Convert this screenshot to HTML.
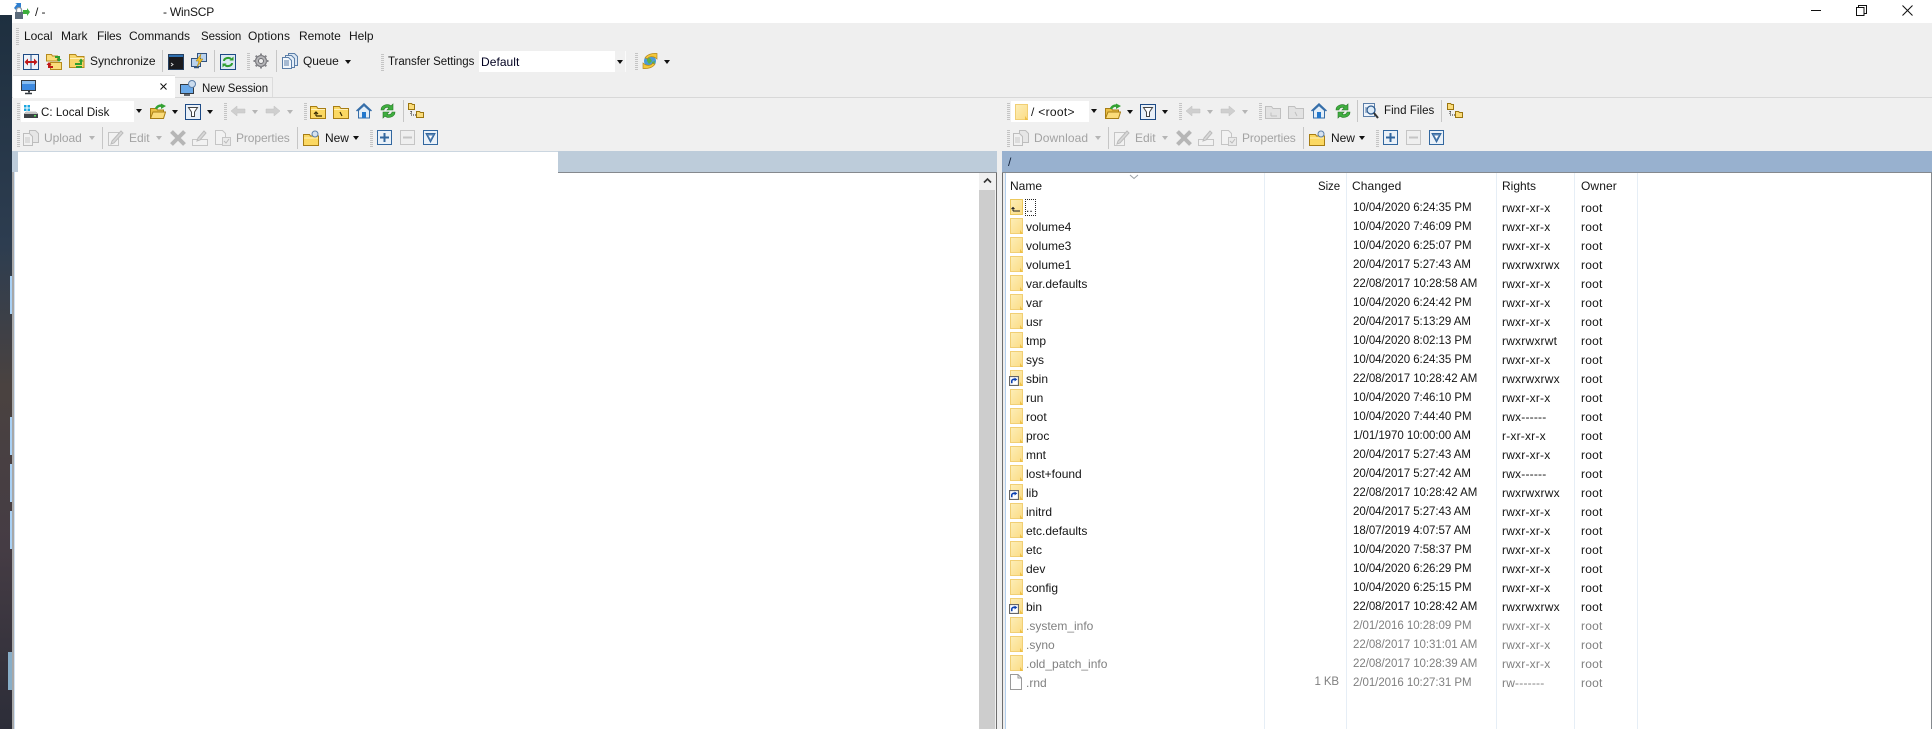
<!DOCTYPE html>
<html><head><meta charset="utf-8"><title>WinSCP</title>
<style>
html,body{margin:0;padding:0;width:1932px;height:729px;overflow:hidden;background:#fff}
body{position:relative;font:11.5px "Liberation Sans",sans-serif;color:#151515}
div,span,svg{position:absolute}
.t{white-space:nowrap;line-height:16px;height:16px;letter-spacing:-.1px}
.d{color:#a3a3a3}
.m{font-size:12px;letter-spacing:-.05px}
.z{font-size:11.5px;letter-spacing:-.1px}
svg.i{width:16px;height:16px;overflow:visible}
svg.f{left:1010px;width:13px;height:16px}
svg.l{left:1009px;width:10px;height:10px}
.g{width:3px;height:17px;background:repeating-linear-gradient(#c4c4c4 0 1px,#efefef 1px 2px)}
.s{width:1px;height:22px;background:#c6c6c6}
.a{width:0;height:0;border:3.5px solid transparent;border-top:4px solid #111;border-bottom:0}
.ad{border-top-color:#b5b5b5}
.r{left:0;top:0;height:19px;width:1px}
.r span{white-space:nowrap;line-height:19px;top:1px;font-size:12px;letter-spacing:.2px}
.r span.n{left:1026px;letter-spacing:0}
.r span.c{left:1353px;top:1px;font-size:11.5px;letter-spacing:-.05px}
.h{left:1502px}.o{left:1581px}
.q{color:#808080}
.v{width:1px;background:#e6eef6;top:173px;height:556px}
</style></head><body>
<svg width="0" height="0" style="position:absolute">
<defs>
<linearGradient id="fg" x1="0" x2="1" y1="0" y2="1"><stop offset="0" stop-color="#fdeeb8"/><stop offset="1" stop-color="#fbdc85"/></linearGradient>
<symbol id="split" viewBox="0 0 16 16"><rect x=".5" y=".5" width="15" height="15" fill="#eef3f9" stroke="#1d4a85"/><path d="M8 1v14" stroke="#1d4a85"/><path d="M3 8h10" stroke="#c01818" stroke-width="2"/><path d="M5 4.500L1.500 8 5 11.500zM11 4.500L14.500 8 11 11.500z" fill="#c01818"/></symbol>
<symbol id="syn1" viewBox="0 0 16 16"><path d="M.5 .5h5l1 1.500h5v5H.5z" fill="#fbdc7a" stroke="#b58a1e"/><path d="M4.500 8.500h11v7h-11z" fill="#fbdc7a" stroke="#b58a1e"/><path d="M9 3h4v2" fill="none" stroke="#2f9e2f" stroke-width="2"/><path d="M10.500 5h5L13 8z" fill="#2f9e2f"/><path d="M7 13H3v-2" fill="none" stroke="#c01818" stroke-width="2"/><path d="M.5 11h5L3 8z" fill="#c01818"/></symbol>
<symbol id="syn2" viewBox="0 0 16 16"><path d="M.5 1.500h6l1.500 2h7v11H.5z" fill="#f7d568" stroke="#b58a1e"/><path d="M1 5.500h14" stroke="#fff0b8"/><path d="M6 11h6V8" fill="none" stroke="#2f9e2f" stroke-width="2"/><path d="M9.500 8.500h5L12 5.500z" fill="#2f9e2f"/><path d="M13 14H7" stroke="#2f9e2f" stroke-width="2"/></symbol>
<symbol id="term" viewBox="0 0 16 16"><rect x=".5" y=".5" width="15" height="15" fill="#1a1a1e" stroke="#27405f"/><rect x="1" y="1" width="14" height="2" fill="#2e6fb0"/><path d="M3 9l2 1.500L3 12" fill="none" stroke="#ddd"/></symbol>
<symbol id="putty" viewBox="0 0 16 16"><rect x="6.500" y=".5" width="9" height="8" fill="#b9d2ee" stroke="#31537f"/><rect x=".5" y="5.500" width="9" height="8" fill="#b9d2ee" stroke="#31537f"/><path d="M3 14.500h5" stroke="#31537f" stroke-width="1.500"/><path d="M10 1L5 8h3l-2 6 6-8H9z" fill="#f2c12e" stroke="#a37c10" stroke-width=".5"/></symbol>
<symbol id="bsync" viewBox="0 0 16 16"><rect x=".5" y=".5" width="15" height="15" fill="#dce8f4" stroke="#1d4a85"/><path d="M4 7c0-3 5-4 7-2" fill="none" stroke="#2f9e2f" stroke-width="2"/><path d="M9.500 6.500h4V2.500z" fill="#2f9e2f"/><path d="M12 9c0 3-5 4-7 2" fill="none" stroke="#2f9e2f" stroke-width="2"/><path d="M6.500 9.500h-4v4z" fill="#2f9e2f"/></symbol>
<symbol id="gear" viewBox="0 0 16 16"><circle cx="8" cy="8" r="5.500" fill="#b5b5b8" stroke="#6e6e72" stroke-width="1"/><circle cx="8" cy="8" r="2.500" fill="#efefef" stroke="#6e6e72"/><path d="M8 .5v2.500M8 13v2.500M.5 8H3M13 8h2.500M2.700 2.700l1.800 1.800M11.500 11.500l1.800 1.800M13.300 2.700l-1.800 1.800M4.500 11.500l-1.800 1.800" stroke="#85858a" stroke-width="2"/></symbol>
<symbol id="queue" viewBox="0 0 16 16"><path d="M6.500 .5h6l3 3v9h-9z" fill="#dbe7f3" stroke="#5b7ea8"/><path d="M3.500 2.500h6l3 3v9h-9z" fill="#e6eff8" stroke="#5b7ea8"/><path d="M.5 4.500h6l3 3v8h-9z" fill="#f2f7fc" stroke="#5b7ea8"/><path d="M2 8h5M2 10h5M2 12h5" stroke="#5b7ea8"/></symbol>
<symbol id="globe" viewBox="0 0 16 16"><circle cx="8" cy="8" r="6" fill="#4a9bd9"/><path d="M5 5l3 0 2 3-3 3-2-3zM10 9l3-1-1 4-2 1z" fill="#5ab04a"/><path d="M3 5C5 1.500 10 0 15 .5V6l-2-1.500C10 3 7 3.500 5.500 5.500z" fill="#f3c73a" stroke="#b58a1e" stroke-width=".7"/><path d="M13 11c-2 3.500-7 5-12 4.500V10l2 1.500c3 1.500 6 1 7.500-1z" fill="#f3c73a" stroke="#b58a1e" stroke-width=".7"/></symbol>
<symbol id="pc" viewBox="0 0 16 16"><rect x=".5" y="1.500" width="14" height="10" fill="#3d8ae0" stroke="#33393f"/><rect x="1" y="2" width="13" height="3" fill="#88bdf0"/><path d="M7 12h2v1.500H7z" fill="#33393f"/><path d="M4 14.500h7" stroke="#33393f" stroke-width="1.500"/></symbol>
<symbol id="pcnew" viewBox="0 0 16 16"><rect x=".5" y="4.500" width="13" height="9" fill="#6aa9e8" stroke="#33393f"/><path d="M4 15h6" stroke="#33393f" stroke-width="1.500"/><circle cx="12" cy="4" r="3.500" fill="#cbdcee" stroke="#5b7ea8"/></symbol>
<symbol id="drive" viewBox="0 0 16 16"><rect x="1" y="1" width="2.500" height="2.500" fill="#19a6e0"/><rect x="4.500" y="1" width="2.500" height="2.500" fill="#19a6e0"/><rect x="1" y="4.500" width="2.500" height="2.500" fill="#19a6e0"/><rect x="4.500" y="4.500" width="2.500" height="2.500" fill="#19a6e0"/><path d="M1 10l2-2h10l2 2z" fill="#d5d5d5" stroke="#888" stroke-width=".5"/><rect x="1" y="10" width="14" height="4" fill="#3e4347"/><rect x="11" y="11" width="2" height="1.500" fill="#5be05b"/></symbol>
<symbol id="open" viewBox="0 0 16 16"><path d="M.5 5.500h6l1 1.500h6v8h-13z" fill="#eabf45" stroke="#a77d14"/><path d="M.5 15.500L3 9h12.500l-2 6.500z" fill="#fbdc7a" stroke="#a77d14"/><path d="M6 6c1-3 4-4 7-3" fill="none" stroke="#33a133" stroke-width="2.500"/><path d="M11 .5L16 3l-5 3z" fill="#33a133"/></symbol>
<symbol id="filter" viewBox="0 0 16 16"><rect x=".5" y=".5" width="15" height="15" fill="#e9f0f8" stroke="#1d4a85" stroke-width="1"/><path d="M3.500 3.500h9L9.500 8v4.500h-3V8z" fill="#fff" stroke="#444"/></symbol>
<symbol id="back" viewBox="0 0 16 16"><path d="M1 8l6-5v3h8v4H7v3z" fill="#cfcfcf" stroke="#c0c0c0" stroke-width=".5"/></symbol>
<symbol id="fwd" viewBox="0 0 16 16"><path d="M15 8L9 3v3H1v4h8v3z" fill="#cfcfcf" stroke="#c0c0c0" stroke-width=".5"/></symbol>
<symbol id="up" viewBox="0 0 16 16"><path d="M.5 2.500h6l1.500 2h7.500v10H.5z" fill="#fbd862" stroke="#a77d14"/><path d="M1 5.500h14" stroke="#fff0b8"/><path d="M6 12h6M6 8.500V12M4 10l2-2 2 2" fill="none" stroke="#3a2c00" stroke-width="1.200"/></symbol>
<symbol id="rootf" viewBox="0 0 16 16"><path d="M.5 2.500h6l1.500 2h7.500v10H.5z" fill="#fbd862" stroke="#a77d14"/><path d="M1 5.500h14" stroke="#fff0b8"/><path d="M7 8l2 4" stroke="#3a2c00" stroke-width="1.200"/></symbol>
<symbol id="upd" viewBox="0 0 16 16"><path d="M.5 2.500h6l1.500 2h7.500v10H.5z" fill="#e2e2e2" stroke="#c0c0c0"/><path d="M6 12h6M6 8.500V12" fill="none" stroke="#c0c0c0"/></symbol>
<symbol id="rootd" viewBox="0 0 16 16"><path d="M.5 2.500h6l1.500 2h7.500v10H.5z" fill="#e2e2e2" stroke="#c0c0c0"/><path d="M7 8l2 4" stroke="#c0c0c0"/></symbol>
<symbol id="home" viewBox="0 0 16 16"><path d="M.5 8L8 1l7.500 7" fill="#9cc0e4" stroke="#356da8" stroke-width="1.500"/><path d="M2.500 7.500V15h11V7.500L8 2.500z" fill="#e3eef8" stroke="#356da8"/><rect x="6" y="9" width="4" height="6" fill="#2277cc"/></symbol>
<symbol id="refr" viewBox="0 0 16 16"><path d="M1 7c0-5 7-7 10-4l2-2v6H7l2-2C7 3.500 4 5 4 7z" fill="#3fae3f" stroke="#257a25" stroke-width=".6"/><path d="M15 9c0 5-7 7-10 4l-2 2V9h6l-2 2c2 1.500 5 0 5-2z" fill="#3fae3f" stroke="#257a25" stroke-width=".6"/></symbol>
<symbol id="tree" viewBox="0 0 16 16"><path d="M.5 .5h3l1 1h2v5h-6zM8.500 8.500h3l1 1h3v5h-7z" fill="#fbdc7a" stroke="#9a7510"/><path d="M3 8v4h5M3 9h1" stroke="#222" stroke-dasharray="1 1" fill="none"/></symbol>
<symbol id="find" viewBox="0 0 16 16"><rect x=".5" y=".5" width="11" height="13" fill="#eef4fb" stroke="#5b7ea8"/><circle cx="8" cy="7" r="4" fill="#dcebf8" stroke="#2c5a8f" stroke-width="1.300"/><path d="M11 10l4 5" stroke="#333" stroke-width="2"/><path d="M2 5h2M2 7h2M2 9h2" stroke="#5b7ea8"/></symbol>
<symbol id="upl" viewBox="0 0 16 16"><path d="M6.500 .5h6l3 3v9h-9z" fill="#e6e6e6" stroke="#bdbdbd"/><path d="M.5 3.500h6l3 3v9h-9z" fill="#f0f0f0" stroke="#bdbdbd"/><path d="M2 8h5M2 10h5M2 12h5" stroke="#c8c8c8"/></symbol>
<symbol id="edit" viewBox="0 0 16 16"><path d="M.5 2.500h10v13H.5z" fill="#f2f2f2" stroke="#c5c5c5"/><path d="M4 11l9-10 2 2-9 10-3 1z" fill="#d8d8d8" stroke="#bbb"/></symbol>
<symbol id="del" viewBox="0 0 16 16"><path d="M1.500 1.500l13 13M14.500 1.500l-13 13" stroke="#b6b6b6" stroke-width="4"/></symbol>
<symbol id="ren" viewBox="0 0 16 16"><path d="M.5 9.500h15v6H.5z" fill="#f2f2f2" stroke="#c5c5c5"/><path d="M6 8l6-7 2 2-6 7-3 1z" fill="#d8d8d8" stroke="#bbb"/></symbol>
<symbol id="prop" viewBox="0 0 16 16"><path d="M.5 .5h7l3 3v11H.5z" fill="#f2f2f2" stroke="#c5c5c5"/><rect x="7.500" y="7.500" width="8" height="8" fill="#eaeaea" stroke="#c5c5c5"/><path d="M9 11l2 2 3-4" fill="none" stroke="#bbb"/></symbol>
<symbol id="newf" viewBox="0 0 16 16"><path d="M.5 4.500h6l1 1.500h8v9.500H.5z" fill="#fbd862" stroke="#a77d14"/><path d="M1 8h14" stroke="#fff0b8"/><circle cx="12" cy="4" r="3" fill="#d6e2ef" stroke="#5b7ea8"/></symbol>
<symbol id="plus" viewBox="0 0 16 16"><rect x=".5" y=".5" width="14" height="14" fill="#eaf1f8" stroke="#32679f"/><path d="M7.500 3v9M3 7.500h9" stroke="#32679f" stroke-width="2"/></symbol>
<symbol id="minus" viewBox="0 0 16 16"><rect x=".5" y=".5" width="14" height="14" fill="#efefef" stroke="#c5c5c5"/><path d="M3 7.500h9" stroke="#c5c5c5" stroke-width="2"/></symbol>
<symbol id="inv" viewBox="0 0 16 16"><rect x=".5" y=".5" width="14" height="14" fill="#eaf1f8" stroke="#32679f"/><path d="M3 3.500h9L7.500 12z" fill="#5b86b5" stroke="#32679f"/><path d="M5.500 5.500h4L7.500 9z" fill="#fff"/></symbol>
<symbol id="lock" viewBox="0 0 16 16"><path d="M0 5L3 1 1 0h6v6L5 4 2 7z" fill="#2f7fd0"/><path d="M9 7l4 0 0-2 3 4-3 4v-2H9l-1 4z" fill="#3cae3c"/><rect x="1" y="9" width="8" height="7" fill="#5b6b7b"/><path d="M2.500 9V7a2.500 2.500 0 0 1 5 0V9" fill="none" stroke="#8a96a2" stroke-width="1.300"/></symbol>
<symbol id="ff" viewBox="0 0 13 16"><rect x=".5" y=".5" width="12" height="15" fill="url(#fg)" stroke="#f1cf74"/><path d="M10 16v-4l3 4z" fill="#eebf45"/></symbol>
<symbol id="fu" viewBox="0 0 13 16"><rect x=".5" y=".5" width="12" height="15" fill="url(#fg)" stroke="#ecc85c"/><path d="M3 12h7M3 8.500V12M1.500 10L3 8.500 4.500 10" fill="none" stroke="#222" stroke-width="1"/></symbol>
<symbol id="lnk" viewBox="0 0 9 9"><rect x=".5" y=".5" width="8" height="8" fill="#fff" stroke="#666"/><path d="M2.500 6.500V4.500c0-1 1-1.500 2-1.500H6" fill="none" stroke="#0b3fae" stroke-width="1.400"/><path d="M5 1.500L7.500 3 5 5z" fill="#0b3fae"/></symbol>
</defs></svg>

<!-- desktop strip -->
<div style="left:0;top:15px;width:12px;height:714px;background:linear-gradient(#1e2f3f 0,#2d3d50 32%,#4a4240 52%,#453c44 75%,#2c2d38 100%)"></div>
<div style="left:10px;top:276px;width:2px;height:38px;background:#a8d0f4"></div>
<div style="left:10px;top:417px;width:2px;height:38px;background:#a8d0f4"></div>
<div style="left:10px;top:464px;width:2px;height:38px;background:#a8d0f4"></div>
<div style="left:10px;top:511px;width:2px;height:38px;background:#a8d0f4"></div>
<div style="left:8px;top:652px;width:4px;height:38px;background:#88aec8"></div>

<!-- window bg -->
<div style="left:12px;top:23px;width:1920px;height:128px;background:#efefef"></div>
<div style="left:12px;top:97px;width:1920px;height:1px;background:#d8d8d8"></div>
<div style="left:12px;top:98px;width:1920px;height:53px;background:#f0f0f0"></div>
<div style="left:12px;top:151px;width:546px;height:1px;background:#cbd6e0"></div>

<!-- title -->
<svg class="i" style="left:14px;top:3px"><use href="#lock"/></svg>
<span class="t" style="left:35px;top:4px;font-size:12px">/ -</span>
<span class="t" style="left:163px;top:4px;font-size:12px;letter-spacing:-.2px">- WinSCP</span>
<div style="left:1811px;top:10px;width:10px;height:1px;background:#111"></div>
<svg style="left:1856px;top:5px;width:11px;height:11px"><path d="M.5 2.500h7.500v8h-7.500zM2.500 2.500v-2h8v8h-2.500" fill="none" stroke="#111"/></svg>
<svg style="left:1902px;top:5px;width:11px;height:11px"><path d="M.5 .5l10 10M10.500 .5l-10 10" stroke="#111" fill="none"/></svg>

<!-- menu -->
<div class="g" style="left:16px;top:28px"></div>
<span class="t m" style="left:24px;top:28px">Local</span>
<span class="t m" style="left:61px;top:28px">Mark</span>
<span class="t m" style="left:97px;top:28px;letter-spacing:-.2px">Files</span>
<span class="t m" style="left:129px;top:28px">Commands</span>
<span class="t z" style="left:201px;top:29px">Session</span>
<span class="t m" style="left:248px;top:28px;letter-spacing:.1px">Options</span>
<span class="t m" style="left:299px;top:28px">Remote</span>
<span class="t m" style="left:349px;top:28px">Help</span>

<!-- toolbar row 2 -->
<div class="g" style="left:17px;top:53px"></div>
<svg class="i" style="left:23px;top:54px"><use href="#split"/></svg>
<svg class="i" style="left:46px;top:54px"><use href="#syn1"/></svg>
<svg class="i" style="left:69px;top:53px"><use href="#syn2"/></svg>
<span class="t m" style="left:90px;top:53px">Synchronize</span>
<div class="s" style="left:162px;top:50px"></div>
<svg class="i" style="left:168px;top:54px"><use href="#term"/></svg>
<svg class="i" style="left:191px;top:53px"><use href="#putty"/></svg>
<div class="s" style="left:214px;top:50px"></div>
<svg class="i" style="left:220px;top:54px"><use href="#bsync"/></svg>
<div class="g" style="left:247px;top:53px"></div>
<svg class="i" style="left:253px;top:53px"><use href="#gear"/></svg>
<div class="s" style="left:276px;top:50px"></div>
<svg class="i" style="left:282px;top:53px"><use href="#queue"/></svg>
<span class="t m" style="left:303px;top:53px">Queue</span>
<div class="a" style="left:345px;top:60px"></div>
<div class="g" style="left:381px;top:54px"></div>
<span class="t" style="left:388px;top:54px;font-size:11.5px;letter-spacing:-.05px">Transfer Settings</span>
<div style="left:479px;top:51px;width:136px;height:21px;background:#fff"></div>
<div style="left:615px;top:51px;width:11px;height:21px;background:#f0f0f0;box-shadow:inset -1px 0 #fafafa"></div>
<span class="t m" style="left:481px;top:54px;color:#000020;letter-spacing:.05px">Default</span>
<div class="a" style="left:617px;top:60px"></div>
<div class="g" style="left:635px;top:53px"></div>
<svg class="i" style="left:642px;top:53px"><use href="#globe"/></svg>
<div class="a" style="left:664px;top:60px"></div>

<!-- tabs -->
<div style="left:13px;top:76px;width:162px;height:22px;background:#fff;box-shadow:0 -1px #dedede"></div>
<svg class="i" style="left:21px;top:79px"><use href="#pc"/></svg>
<svg style="left:160px;top:83px;width:7px;height:7px"><path d="M.5 .5l6 6M6.500 .5l-6 6" stroke="#111" fill="none"/></svg>
<div style="left:175px;top:77px;width:98px;height:20px;background:#f0f0f0;box-shadow:inset -1px 0 #dcdcdc,inset 0 1px #dcdcdc"></div>
<svg class="i" style="left:180px;top:80px"><use href="#pcnew"/></svg>
<span class="t z" style="left:202px;top:81px;letter-spacing:-.1px">New Session</span>

<!-- left row 3 -->
<div class="g" style="left:17px;top:103px"></div>
<div style="left:21px;top:101px;width:124px;height:21px;background:#fff"></div>
<div style="left:134px;top:101px;width:11px;height:21px;background:#f0f0f0"></div>
<svg class="i" style="left:23px;top:104px"><use href="#drive"/></svg>
<span class="t z" style="left:41px;top:105px;letter-spacing:.05px">C: Local Disk</span>
<div class="a" style="left:136px;top:109px"></div>
<svg class="i" style="left:150px;top:103px"><use href="#open"/></svg>
<div class="a" style="left:172px;top:110px"></div>
<svg class="i" style="left:185px;top:104px"><use href="#filter"/></svg>
<div class="a" style="left:207px;top:110px"></div>
<div class="g" style="left:224px;top:103px"></div>
<svg class="i" style="left:230px;top:103px"><use href="#back"/></svg>
<div class="a ad" style="left:252px;top:110px"></div>
<svg class="i" style="left:265px;top:103px"><use href="#fwd"/></svg>
<div class="a ad" style="left:287px;top:110px"></div>
<div class="g" style="left:304px;top:103px"></div>
<svg class="i" style="left:310px;top:104px"><use href="#up"/></svg>
<svg class="i" style="left:333px;top:104px"><use href="#rootf"/></svg>
<svg class="i" style="left:356px;top:103px"><use href="#home"/></svg>
<svg class="i" style="left:380px;top:103px"><use href="#refr"/></svg>
<div class="s" style="left:403px;top:100px"></div>
<svg class="i" style="left:408px;top:103px"><use href="#tree"/></svg>

<!-- left row 4 -->
<div class="g" style="left:17px;top:130px"></div>
<svg class="i" style="left:23px;top:130px"><use href="#upl"/></svg>
<span class="t m d" style="left:44px;top:130px">Upload</span>
<div class="a ad" style="left:89px;top:136px"></div>
<div class="s" style="left:102px;top:127px"></div>
<svg class="i" style="left:108px;top:130px"><use href="#edit"/></svg>
<span class="t m d" style="left:129px;top:130px">Edit</span>
<div class="a ad" style="left:156px;top:136px"></div>
<svg class="i" style="left:170px;top:130px"><use href="#del"/></svg>
<svg class="i" style="left:192px;top:130px"><use href="#ren"/></svg>
<svg class="i" style="left:215px;top:130px"><use href="#prop"/></svg>
<span class="t m d" style="left:236px;top:130px;letter-spacing:-.1px">Properties</span>
<div class="s" style="left:297px;top:127px"></div>
<svg class="i" style="left:303px;top:130px"><use href="#newf"/></svg>
<span class="t m" style="left:325px;top:130px">New</span>
<div class="a" style="left:353px;top:136px"></div>
<div class="g" style="left:370px;top:130px"></div>
<svg class="i" style="left:377px;top:130px"><use href="#plus"/></svg>
<svg class="i" style="left:400px;top:130px"><use href="#minus"/></svg>
<svg class="i" style="left:423px;top:130px"><use href="#inv"/></svg>

<!-- right row 3 -->
<div class="g" style="left:1007px;top:103px"></div>
<div style="left:1011px;top:101px;width:89px;height:21px;background:#fff"></div>
<div style="left:1089px;top:101px;width:11px;height:21px;background:#f0f0f0"></div>
<svg class="i" style="left:1015px;top:104px;width:13px"><use href="#ff"/></svg>
<span class="t m" style="left:1031px;top:104px;letter-spacing:.3px">/ &lt;root&gt;</span>
<div class="a" style="left:1091px;top:109px"></div>
<svg class="i" style="left:1105px;top:103px"><use href="#open"/></svg>
<div class="a" style="left:1127px;top:110px"></div>
<svg class="i" style="left:1140px;top:104px"><use href="#filter"/></svg>
<div class="a" style="left:1162px;top:110px"></div>
<div class="g" style="left:1179px;top:103px"></div>
<svg class="i" style="left:1185px;top:103px"><use href="#back"/></svg>
<div class="a ad" style="left:1207px;top:110px"></div>
<svg class="i" style="left:1220px;top:103px"><use href="#fwd"/></svg>
<div class="a ad" style="left:1242px;top:110px"></div>
<div class="g" style="left:1259px;top:103px"></div>
<svg class="i" style="left:1265px;top:104px"><use href="#upd"/></svg>
<svg class="i" style="left:1288px;top:104px"><use href="#rootd"/></svg>
<svg class="i" style="left:1311px;top:103px"><use href="#home"/></svg>
<svg class="i" style="left:1335px;top:103px"><use href="#refr"/></svg>
<div class="s" style="left:1357px;top:100px"></div>
<svg class="i" style="left:1363px;top:103px"><use href="#find"/></svg>
<span class="t z" style="left:1384px;top:103px;letter-spacing:.05px">Find Files</span>
<div class="s" style="left:1441px;top:100px"></div>
<svg class="i" style="left:1447px;top:103px"><use href="#tree"/></svg>

<!-- right row 4 -->
<div class="g" style="left:1007px;top:130px"></div>
<svg class="i" style="left:1013px;top:130px"><use href="#upl"/></svg>
<span class="t m d" style="left:1034px;top:130px;letter-spacing:.1px">Download</span>
<div class="a ad" style="left:1095px;top:136px"></div>
<div class="s" style="left:1108px;top:127px"></div>
<svg class="i" style="left:1114px;top:130px"><use href="#edit"/></svg>
<span class="t m d" style="left:1135px;top:130px">Edit</span>
<div class="a ad" style="left:1162px;top:136px"></div>
<svg class="i" style="left:1176px;top:130px"><use href="#del"/></svg>
<svg class="i" style="left:1198px;top:130px"><use href="#ren"/></svg>
<svg class="i" style="left:1221px;top:130px"><use href="#prop"/></svg>
<span class="t m d" style="left:1242px;top:130px;letter-spacing:-.1px">Properties</span>
<div class="s" style="left:1303px;top:127px"></div>
<svg class="i" style="left:1309px;top:130px"><use href="#newf"/></svg>
<span class="t m" style="left:1331px;top:130px">New</span>
<div class="a" style="left:1359px;top:136px"></div>
<div class="g" style="left:1376px;top:130px"></div>
<svg class="i" style="left:1383px;top:130px"><use href="#plus"/></svg>
<svg class="i" style="left:1406px;top:130px"><use href="#minus"/></svg>
<svg class="i" style="left:1429px;top:130px"><use href="#inv"/></svg>

<!-- path bars -->
<div style="left:12px;top:151px;width:6px;height:21px;background:#bdccda"></div>
<div style="left:558px;top:151px;width:439px;height:21px;background:#bdccda"></div>
<div style="left:558px;top:172px;width:439px;height:1px;background:#85898e"></div>
<div style="left:1002px;top:151px;width:930px;height:21px;background:#98b1cf"></div>
<span class="t" style="left:1008px;top:154px;color:#10203a;font-size:12px">/</span>
<div style="left:1002px;top:172px;width:930px;height:1px;background:#85898e"></div>

<!-- left panel edges -->
<div style="left:12px;top:172px;width:2px;height:557px;background:#a8a8a8"></div>
<div style="left:14px;top:172px;width:1px;height:557px;background:#cfe0f2"></div>
<div style="left:979px;top:173px;width:16px;height:17px;background:#f0f0f0"></div>
<svg style="left:983px;top:177px;width:9px;height:7px"><path d="M1 5.500l3.500-3.500 3.500 3.500" fill="none" stroke="#333" stroke-width="1.600"/></svg>
<div style="left:979px;top:190px;width:16px;height:539px;background:#cdcdcd"></div>
<div style="left:995px;top:173px;width:1px;height:556px;background:#f0f0f0"></div>
<div style="left:996px;top:173px;width:1px;height:556px;background:#6e6e6e"></div>
<div style="left:997px;top:173px;width:5px;height:556px;background:#efefef"></div>
<div style="left:997px;top:151px;width:5px;height:22px;background:#efefef"></div>
<div style="left:1002px;top:173px;width:1px;height:556px;background:#6e6e6e"></div>
<div style="left:1003px;top:173px;width:2px;height:556px;background:#eeeeee"></div>
<div style="left:1005px;top:173px;width:1px;height:556px;background:#b4d0ee"></div>
<div style="left:1931px;top:172px;width:1px;height:557px;background:#85898e"></div>

<!-- column lines -->
<div class="v" style="left:1264px"></div>
<div class="v" style="left:1346px"></div>
<div class="v" style="left:1496px"></div>
<div class="v" style="left:1574px"></div>
<div class="v" style="left:1637px"></div>

<!-- header -->
<svg style="left:1129px;top:174px;width:10px;height:6px"><path d="M1 1l4 3.500L9 1" fill="none" stroke="#9aa0a6"/></svg>
<span class="t" style="left:1010px;top:178px;font-size:12px;letter-spacing:0">Name</span>
<span class="t" style="right:592px;top:179px">Size</span>
<span class="t" style="left:1352px;top:178px;font-size:12px;letter-spacing:.1px">Changed</span>
<span class="t" style="left:1502px;top:178px;font-size:12px;letter-spacing:0">Rights</span>
<span class="t" style="left:1581px;top:178px;font-size:12px;letter-spacing:.1px">Owner</span>

<!-- rows -->
<svg class="f" style="top:199px"><use href="#fu"/></svg>
<div style="left:1025px;top:199px;width:9px;height:15px;border:1px dotted #222"></div>
<div class="r" style="top:198px"><span class="n">..</span><span class="c">10/04/2020 6:24:35 PM</span><span class="h">rwxr-xr-x</span><span class="o">root</span></div>
<svg class="f" style="top:218px"><use href="#ff"/></svg><div class="r" style="top:217px"><span class="n">volume4</span><span class="c">10/04/2020 7:46:09 PM</span><span class="h">rwxr-xr-x</span><span class="o">root</span></div>
<svg class="f" style="top:237px"><use href="#ff"/></svg><div class="r" style="top:236px"><span class="n">volume3</span><span class="c">10/04/2020 6:25:07 PM</span><span class="h">rwxr-xr-x</span><span class="o">root</span></div>
<svg class="f" style="top:256px"><use href="#ff"/></svg><div class="r" style="top:255px"><span class="n">volume1</span><span class="c">20/04/2017 5:27:43 AM</span><span class="h">rwxrwxrwx</span><span class="o">root</span></div>
<svg class="f" style="top:275px"><use href="#ff"/></svg><div class="r" style="top:274px"><span class="n">var.defaults</span><span class="c">22/08/2017 10:28:58 AM</span><span class="h">rwxr-xr-x</span><span class="o">root</span></div>
<svg class="f" style="top:294px"><use href="#ff"/></svg><div class="r" style="top:293px"><span class="n">var</span><span class="c">10/04/2020 6:24:42 PM</span><span class="h">rwxr-xr-x</span><span class="o">root</span></div>
<svg class="f" style="top:313px"><use href="#ff"/></svg><div class="r" style="top:312px"><span class="n">usr</span><span class="c">20/04/2017 5:13:29 AM</span><span class="h">rwxr-xr-x</span><span class="o">root</span></div>
<svg class="f" style="top:332px"><use href="#ff"/></svg><div class="r" style="top:331px"><span class="n">tmp</span><span class="c">10/04/2020 8:02:13 PM</span><span class="h">rwxrwxrwt</span><span class="o">root</span></div>
<svg class="f" style="top:351px"><use href="#ff"/></svg><div class="r" style="top:350px"><span class="n">sys</span><span class="c">10/04/2020 6:24:35 PM</span><span class="h">rwxr-xr-x</span><span class="o">root</span></div>
<svg class="f" style="top:370px"><use href="#ff"/></svg><svg class="l" style="top:376px"><use href="#lnk"/></svg><div class="r" style="top:369px"><span class="n">sbin</span><span class="c">22/08/2017 10:28:42 AM</span><span class="h">rwxrwxrwx</span><span class="o">root</span></div>
<svg class="f" style="top:389px"><use href="#ff"/></svg><div class="r" style="top:388px"><span class="n">run</span><span class="c">10/04/2020 7:46:10 PM</span><span class="h">rwxr-xr-x</span><span class="o">root</span></div>
<svg class="f" style="top:408px"><use href="#ff"/></svg><div class="r" style="top:407px"><span class="n">root</span><span class="c">10/04/2020 7:44:40 PM</span><span class="h">rwx------</span><span class="o">root</span></div>
<svg class="f" style="top:427px"><use href="#ff"/></svg><div class="r" style="top:426px"><span class="n">proc</span><span class="c">1/01/1970 10:00:00 AM</span><span class="h">r-xr-xr-x</span><span class="o">root</span></div>
<svg class="f" style="top:446px"><use href="#ff"/></svg><div class="r" style="top:445px"><span class="n">mnt</span><span class="c">20/04/2017 5:27:43 AM</span><span class="h">rwxr-xr-x</span><span class="o">root</span></div>
<svg class="f" style="top:465px"><use href="#ff"/></svg><div class="r" style="top:464px"><span class="n">lost+found</span><span class="c">20/04/2017 5:27:42 AM</span><span class="h">rwx------</span><span class="o">root</span></div>
<svg class="f" style="top:484px"><use href="#ff"/></svg><svg class="l" style="top:490px"><use href="#lnk"/></svg><div class="r" style="top:483px"><span class="n">lib</span><span class="c">22/08/2017 10:28:42 AM</span><span class="h">rwxrwxrwx</span><span class="o">root</span></div>
<svg class="f" style="top:503px"><use href="#ff"/></svg><div class="r" style="top:502px"><span class="n">initrd</span><span class="c">20/04/2017 5:27:43 AM</span><span class="h">rwxr-xr-x</span><span class="o">root</span></div>
<svg class="f" style="top:522px"><use href="#ff"/></svg><div class="r" style="top:521px"><span class="n">etc.defaults</span><span class="c">18/07/2019 4:07:57 AM</span><span class="h">rwxr-xr-x</span><span class="o">root</span></div>
<svg class="f" style="top:541px"><use href="#ff"/></svg><div class="r" style="top:540px"><span class="n">etc</span><span class="c">10/04/2020 7:58:37 PM</span><span class="h">rwxr-xr-x</span><span class="o">root</span></div>
<svg class="f" style="top:560px"><use href="#ff"/></svg><div class="r" style="top:559px"><span class="n">dev</span><span class="c">10/04/2020 6:26:29 PM</span><span class="h">rwxr-xr-x</span><span class="o">root</span></div>
<svg class="f" style="top:579px"><use href="#ff"/></svg><div class="r" style="top:578px"><span class="n">config</span><span class="c">10/04/2020 6:25:15 PM</span><span class="h">rwxr-xr-x</span><span class="o">root</span></div>
<svg class="f" style="top:598px"><use href="#ff"/></svg><svg class="l" style="top:604px"><use href="#lnk"/></svg><div class="r" style="top:597px"><span class="n">bin</span><span class="c">22/08/2017 10:28:42 AM</span><span class="h">rwxrwxrwx</span><span class="o">root</span></div>
<svg class="f" style="top:617px"><use href="#ff"/></svg><div class="r q" style="top:616px"><span class="n">.system_info</span><span class="c">2/01/2016 10:28:09 PM</span><span class="h">rwxr-xr-x</span><span class="o">root</span></div>
<svg class="f" style="top:636px"><use href="#ff"/></svg><div class="r q" style="top:635px"><span class="n">.syno</span><span class="c">22/08/2017 10:31:01 AM</span><span class="h">rwxr-xr-x</span><span class="o">root</span></div>
<svg class="f" style="top:655px"><use href="#ff"/></svg><div class="r q" style="top:654px"><span class="n">.old_patch_info</span><span class="c">22/08/2017 10:28:39 AM</span><span class="h">rwxr-xr-x</span><span class="o">root</span></div>
<svg style="left:1010px;top:674px;width:12px;height:16px"><path d="M.5 .5h7.500l3.500 3.500v11.500H.5z" fill="#fff" stroke="#9a9a9a"/><path d="M8 .5V4h3.500" fill="none" stroke="#9a9a9a"/></svg>
<div class="r q" style="top:673px"><span class="n">.rnd</span><span class="c">2/01/2016 10:27:31 PM</span><span class="h">rw-------</span><span class="o">root</span></div>
<span class="q" style="right:593px;top:673px;line-height:19px;white-space:nowrap;letter-spacing:-.1px">1 KB</span>
</body></html>
